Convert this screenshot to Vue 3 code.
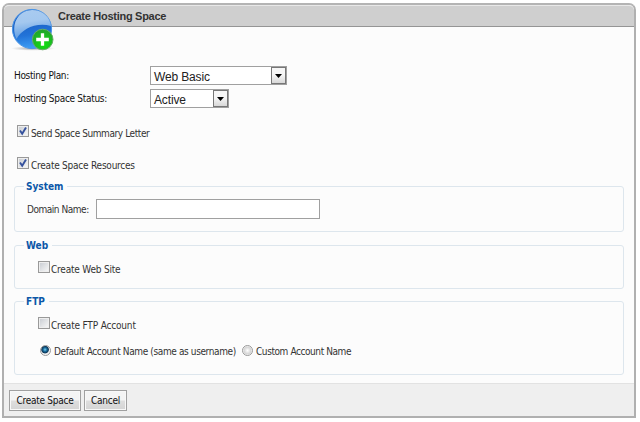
<script setup>
import { ref } from 'vue'

const selects = [
  { label: 'Hosting Plan:', value: 'Web Basic', size: 'wide', fit: 'plan' },
  { label: 'Hosting Space Status:', value: 'Active', size: 'narrow', fit: 'status' },
]
const sendLetter = ref(true)
const createResources = ref(true)
const createSite = ref(false)
const createFtp = ref(false)
const account = ref('default')
const domain = ref('')
</script>

<template>
  <main class="panel">
    <header class="head">
      <svg class="logo" width="44" height="46" viewBox="0 0 44 46">
        <defs>
          <linearGradient id="orb" x1="0.4" y1="0.3" x2="0.5" y2="1">
            <stop offset="0" stop-color="#1b62c6" />
            <stop offset="0.5" stop-color="#2273d8" />
            <stop offset="1" stop-color="#3fa0f6" />
          </linearGradient>
          <linearGradient id="shine" x1="0.3" y1="0" x2="0.5" y2="1">
            <stop offset="0" stop-color="#a9cbf0" />
            <stop offset="0.4" stop-color="#a4c8ef" />
            <stop offset="1" stop-color="#5597e2" />
          </linearGradient>
          <radialGradient id="plus" cx="0.55" cy="0.75" r="0.7">
            <stop offset="0" stop-color="#10e010" />
            <stop offset="1" stop-color="#22a52b" />
          </radialGradient>
          <radialGradient id="shade">
            <stop offset="0" stop-color="#777" stop-opacity="0.7" />
            <stop offset="1" stop-color="#999" stop-opacity="0" />
          </radialGradient>
        </defs>
        <ellipse cx="22" cy="41.500" rx="22" ry="2.300" fill="url(#shade)" />
        <circle cx="21" cy="22" r="19.600" fill="url(#orb)" stroke="#4b95e6" stroke-width="1" />
        <path d="M5.500 32C-1 18 7 3 21 3C32 3 39 10 40 19C25 15 11 22 5.500 32Z" fill="url(#shine)" />
        <circle cx="31.700" cy="32.500" r="10.300" fill="url(#plus)" stroke="#67ab68" stroke-width="1" />
        <path d="M31.500 26.200V38.800M25.200 32.500H37.800" stroke="#fff" stroke-width="3.300" />
      </svg>
      <h1>Create Hosting Space</h1>
    </header>

    <section class="body">
      <div v-for="s in selects" :key="s.label" class="row">
        <span class="label" :class="s.fit">{{ s.label }}</span>
        <div class="select" :class="s.size">
          <span class="value">{{ s.value }}</span>
          <span class="drop"><svg width="7" height="4" viewBox="0 0 7 4"><path d="M0 0H7L3.500 4Z" fill="#000" /></svg></span>
        </div>
      </div>

      <div class="check first" @click="sendLetter = !sendLetter">
        <span class="box"><svg v-if="sendLetter" width="10" height="10" viewBox="0 0 10 10"><path d="M2 4.500L4.200 7.700L8 1.500" /></svg></span>
        <span class="send">Send Space Summary Letter</span>
      </div>
      <div class="check second" @click="createResources = !createResources">
        <span class="box"><svg v-if="createResources" width="10" height="10" viewBox="0 0 10 10"><path d="M2 4.500L4.200 7.700L8 1.500" /></svg></span>
        <span class="resources">Create Space Resources</span>
      </div>

      <div class="group system">
        <h2>System</h2>
        <span class="domain">Domain Name:</span>
        <input v-model="domain" type="text" />
      </div>

      <div class="group web">
        <h2>Web</h2>
        <div class="check" @click="createSite = !createSite">
          <span class="box"><svg v-if="createSite" width="10" height="10" viewBox="0 0 10 10"><path d="M2 4.500L4.200 7.700L8 1.500" /></svg></span>
          <span class="site">Create Web Site</span>
        </div>
      </div>

      <div class="group ftp">
        <h2>FTP</h2>
        <div class="check" @click="createFtp = !createFtp">
          <span class="box"><svg v-if="createFtp" width="10" height="10" viewBox="0 0 10 10"><path d="M2 4.500L4.200 7.700L8 1.500" /></svg></span>
          <span class="account">Create FTP Account</span>
        </div>
        <div class="radios">
          <span class="radio" :class="{ on: account === 'default' }" @click="account = 'default'"></span>
          <span class="default">Default Account Name (same as username)</span>
          <span class="radio" :class="{ on: account === 'custom' }" @click="account = 'custom'"></span>
          <span class="custom">Custom Account Name</span>
        </div>
      </div>
    </section>

    <footer class="foot">
      <button class="create">Create Space</button>
      <button class="cancel">Cancel</button>
    </footer>
  </main>
</template>

<style>
body {
  background: #fff;
}
</style>

<style scoped>
* {
  box-sizing: border-box;
}
.panel {
  width: 634px;
  height: 415px;
  margin: 3px 0 0 2px;
  display: flex;
  flex-direction: column;
  border: 2px solid #b0b0b0;
  border-top-color: #b4b4b4;
  border-radius: 7px 7px 0 0;
  background: #fcfcfc;
  font-family: "DejaVu Sans Condensed", "DejaVu Sans", sans-serif;
  font-stretch: condensed;
  font-size: 10px;
  line-height: 14px;
  color: #333;
  white-space: nowrap;
}
.head {
  position: relative;
  flex: none;
  height: 22px;
  padding-left: 54px;
  background: #cfcfcf;
  border-top: 1px solid #e8e8e8;
  border-bottom: 1px solid #959595;
  border-radius: 5px 5px 0 0;
}
.logo {
  position: absolute;
  left: 7px;
  top: 1px;
}
h1 {
  margin: 0;
  padding-top: 3px;
  font: bold 11px/15px "Liberation Sans", Arial, sans-serif;
  letter-spacing: -0.28px;
  color: #333;
}
.body {
  flex: 1;
  padding: 39px 10px 0;
}
.row {
  display: flex;
  align-items: center;
  height: 19px;
  margin-bottom: 4px;
  color: #111;
}
.label {
  width: 136px;
}
.plan {
  letter-spacing: -0.35px;
}
.status {
  letter-spacing: -0.3px;
}
.select {
  display: flex;
  height: 19px;
  border: 1px solid #a0a0a0;
  background: #fff;
}
.wide {
  width: 137px;
}
.narrow {
  width: 79px;
}
.value {
  flex: 1;
  padding: 2px 0 0 3px;
  font: 12px/16px "Liberation Sans", Arial, sans-serif;
  letter-spacing: -0.15px;
  color: #222;
}
.drop {
  display: flex;
  align-items: center;
  justify-content: center;
  width: 15px;
  height: 17px;
  border: 1px solid #777;
  background: linear-gradient(#f6f6f6 45%, #d8d8d8);
}
.check {
  display: flex;
  align-items: flex-start;
  gap: 2px;
  height: 16px;
}
.check > span:last-child {
  padding-top: 2px;
}
.first {
  margin: 17px 0 0 3px;
}
.second {
  margin: 16px 0 0 3px;
}
.send {
  letter-spacing: -0.42px;
}
.resources {
  letter-spacing: -0.23px;
}
.box {
  display: flex;
  align-items: center;
  justify-content: center;
  width: 12px;
  height: 12px;
  border: 1px solid #999;
  background: linear-gradient(135deg, #c6cad0, #fafafa);
  box-shadow: inset 0 0 0 1px #eee;
}
.box path {
  fill: none;
  stroke: #35519d;
  stroke-width: 1.9;
}
.group {
  position: relative;
  width: 610px;
  border: 1px solid #dde6ed;
  border-radius: 3px;
}
.group .check {
  gap: 1px;
}
h2 {
  position: absolute;
  top: -7px;
  left: 9px;
  margin: 0;
  padding: 0 4px 0 2px;
  background: #fcfcfc;
  font-size: 10px;
  font-weight: bold;
  line-height: 14px;
  color: #0b57a8;
}
.system {
  display: flex;
  height: 46px;
  margin-top: 13px;
  padding: 12px 12px 0;
}
.domain {
  width: 69px;
  padding-top: 4px;
  letter-spacing: -0.47px;
}
input {
  width: 224px;
  height: 20px;
  padding: 2px 4px;
  border: 1px solid #a0a0a0;
  border-radius: 0;
  background: #fff;
  outline: none;
}
.web {
  height: 44px;
  margin-top: 13px;
  padding: 15px 23px 0;
}
.site {
  letter-spacing: -0.2px;
}
.account {
  letter-spacing: -0.17px;
}
.ftp {
  height: 74px;
  margin-top: 12px;
  padding: 15px 23px 0;
}
.radios {
  display: flex;
  align-items: center;
  height: 14px;
  margin: 12px 0 0 2px;
}
.radio {
  flex: none;
  width: 11px;
  height: 11px;
  margin-top: -3px;
  border: 1px solid #999;
  border-radius: 50%;
  background: radial-gradient(circle, #fff 0, #d4d4d4 55%, #f4f4f4 70%);
}
.radio.on {
  background: radial-gradient(circle at 45% 40%, #79d2f2 0, #1a6c9c 25%, #0c3556 46%, #f2f2f2 58%);
}
.default {
  flex: none;
  width: 191px;
  padding-left: 3px;
  letter-spacing: -0.38px;
}
.custom {
  padding-left: 3px;
  letter-spacing: -0.42px;
}
.foot {
  display: flex;
  flex: none;
  gap: 3px;
  height: 33px;
  padding: 6px 0 0 5px;
  border-top: 1px solid #e2e2e2;
  background: #efefef;
}
button {
  height: 21px;
  padding: 1px 0 0;
  border: 1px solid #a0a0a0;
  border-radius: 0;
  background: linear-gradient(#f4f4f4 48%, #dedede 52%, #d4d4d4);
  box-shadow: inset 0 0 0 1px #f8f8f8;
  font: inherit;
  letter-spacing: -0.28px;
  color: #111;
}
.create {
  width: 72px;
}
.cancel {
  width: 43px;
}
</style>
